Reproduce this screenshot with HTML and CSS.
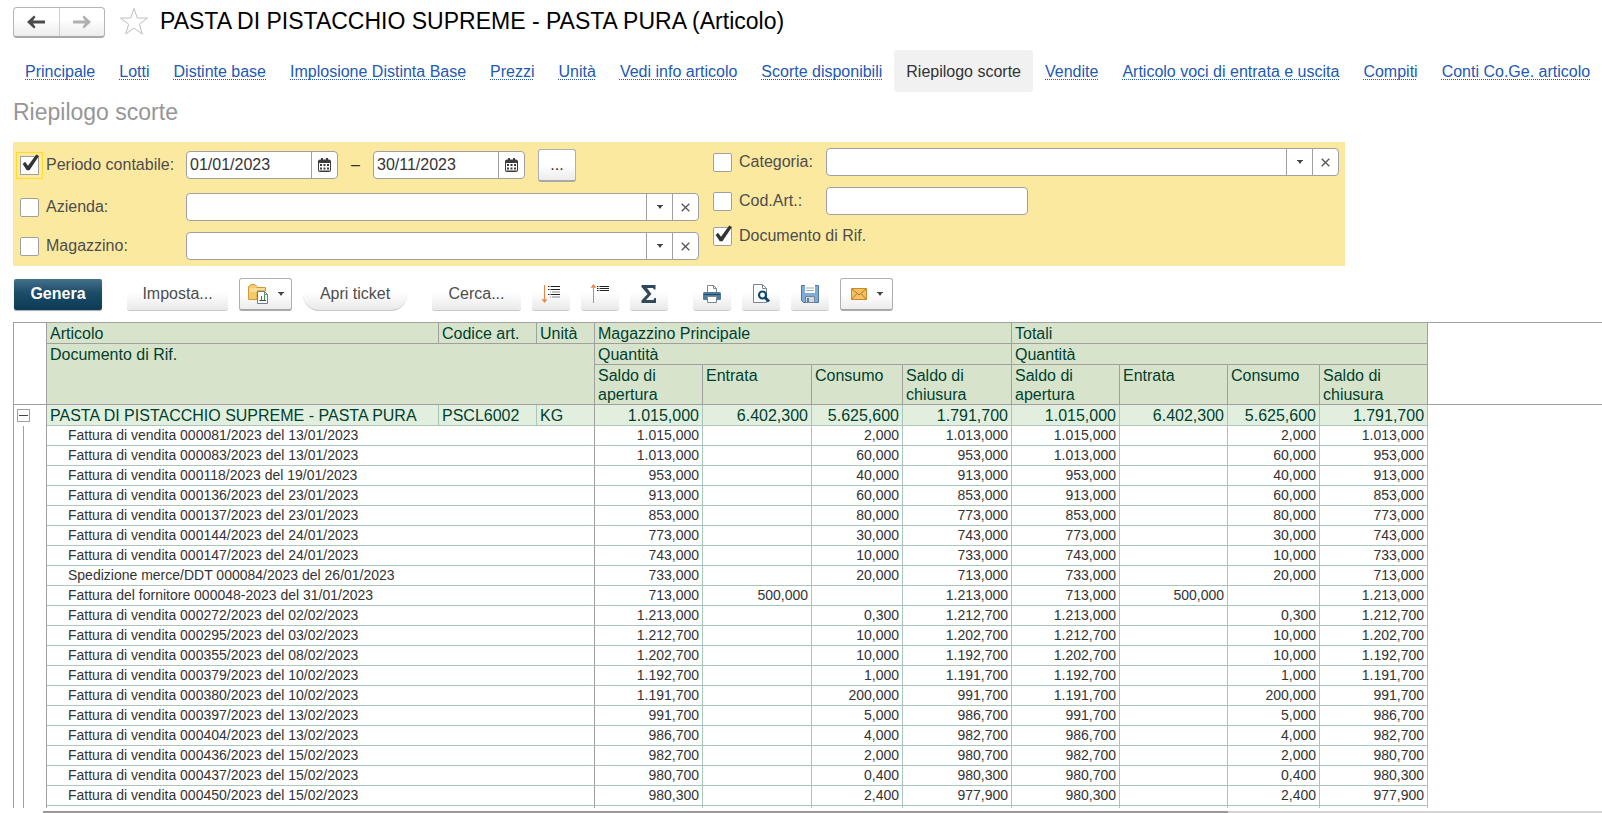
FILE: index.html
```html
<!DOCTYPE html>
<html lang="it">
<head>
<meta charset="utf-8">
<title>PASTA DI PISTACCHIO SUPREME - PASTA PURA (Articolo)</title>
<link rel="stylesheet" href="styles.css">
</head>
<body>
<svg class="defs" aria-hidden="true">
  <symbol id="i-cal" viewBox="0 0 13 14"><path d="M1 2h11v11.500H1z" fill="#fff"/><path fill="#3c3c3c" fill-rule="evenodd" d="M2 1.500h1V0h2v1.500h3V0h2v1.500h1a2 2 0 0 1 2 1.500V12a2 2 0 0 1-2 2H2a2 2 0 0 1-2-2V3a2 2 0 0 1 2-1.500zM1 5v7.500h11V5z"/><path fill="#3c3c3c" d="M2 6h2v2H2zM5.500 6h2v2h-2zM9 6h2v2H9zM2 9.500h2v2H2zM5.500 9.500h2v2h-2zM9 9.500h2v2H9z"/></symbol>
  <symbol id="i-down" viewBox="0 0 6 4"><path fill="#444" d="M0 0h6v1H5L3.500 3.500h-1L1 1H0z"/></symbol>
  <symbol id="i-x" viewBox="0 0 9 9"><path d="M.7.7l7.600 7.600M8.300.7L.7 8.300" stroke="#555" stroke-width="1.300" fill="none"/></symbol>
</svg>
<div class="page">
  <header class="head">
    <div class="nav">
      <button type="button" aria-label="Indietro"><svg width="18" height="14" viewBox="0 0 18 14"><path fill="#4a4a4a" d="M0 7l7-6.500 1.500 1.500L6 5.500h12v3H6L8.500 12 7 13.500z"/></svg></button>
      <button type="button" aria-label="Avanti"><svg width="18" height="14" viewBox="0 0 18 14"><path fill="#b0b0b0" d="M18 7L11 .5 9.500 2 12 5.500H0v3h12L9.500 12l1.500 1.500z"/></svg></button>
    </div>
    <button type="button" class="star" aria-label="Preferiti"><svg width="30" height="29" viewBox="0 0 30 29"><path d="M15 1.500l3.300 9.500 10.200.1-8.200 6.100 3 9.800L15 21.200 6.700 27l3-9.800L1.500 11.100l10.200-.1z" fill="#fff" stroke="#bcbfc2"/></svg></button>
    <h1>PASTA DI PISTACCHIO SUPREME - PASTA PURA (Articolo)</h1>
  </header>
  <nav class="tabs">
    <a href="#">Principale</a><a href="#">Lotti</a><a href="#">Distinte base</a><a href="#">Implosione Distinta Base</a><a href="#">Prezzi</a><a href="#">Unità</a><a href="#">Vedi info articolo</a><a href="#">Scorte disponibili</a><a href="#" class="on" aria-current="page">Riepilogo scorte</a><a href="#">Vendite</a><a href="#">Articolo voci di entrata e uscita</a><a href="#">Compiti</a><a href="#">Conti Co.Ge. articolo</a>
  </nav>
  <h2>Riepilogo scorte</h2>

  <form class="filters">
    <div class="group left">
      <div class="row tall">
        <label class="lab"><input type="checkbox" class="focus" checked>Periodo contabile:</label>
        <div class="field date"><input type="text" value="01/01/2023" aria-label="Dal"><button type="button" aria-label="Calendario"><svg width="13" height="14"><use href="#i-cal"/></svg></button></div>
        <span class="dash">–</span>
        <div class="field date"><input type="text" value="30/11/2023" aria-label="Al"><button type="button" aria-label="Calendario"><svg width="13" height="14"><use href="#i-cal"/></svg></button></div>
        <button type="button" class="btn more">...</button>
      </div>
      <div class="row">
        <label class="lab"><input type="checkbox">Azienda:</label>
        <div class="field wide"><input type="text" aria-label="Azienda"><button type="button" aria-label="Scegli"><svg width="6" height="4"><use href="#i-down"/></svg></button><button type="button" aria-label="Cancella"><svg width="9" height="9"><use href="#i-x"/></svg></button></div>
      </div>
      <div class="row">
        <label class="lab"><input type="checkbox">Magazzino:</label>
        <div class="field wide"><input type="text" aria-label="Magazzino"><button type="button" aria-label="Scegli"><svg width="6" height="4"><use href="#i-down"/></svg></button><button type="button" aria-label="Cancella"><svg width="9" height="9"><use href="#i-x"/></svg></button></div>
      </div>
    </div>
    <div class="group right">
      <div class="row">
        <label class="lab"><input type="checkbox">Categoria:</label>
        <div class="field wide"><input type="text" aria-label="Categoria"><button type="button" aria-label="Scegli"><svg width="6" height="4"><use href="#i-down"/></svg></button><button type="button" aria-label="Cancella"><svg width="9" height="9"><use href="#i-x"/></svg></button></div>
      </div>
      <div class="row">
        <label class="lab"><input type="checkbox">Cod.Art.:</label>
        <div class="field code"><input type="text" aria-label="Codice articolo"></div>
      </div>
      <div class="row">
        <label><input type="checkbox" checked>Documento di Rif.</label>
      </div>
    </div>
  </form>

  <div class="toolbar">
    <div class="set"><button type="button" class="primary">Genera</button></div>
    <div class="set">
      <button type="button" class="soft w-imp">Imposta...</button>
      <button type="button" class="btn drop" aria-label="Varianti"><svg width="20" height="20" viewBox="0 0 20 20"><path d="M.5 15.500v-13L3 .5h4l2 2v1h8.500V7H9v8.500z" fill="#f3cb6b" stroke="#d39b35"/><path d="M1.500 5h15M2 7h7" stroke="#fff0b8"/><path d="M9.500 7.500h7l3 3v9h-10z" fill="#fff" stroke="#6a7f91"/><path d="M16.500 7.500v3h3" fill="none" stroke="#6a7f91"/><path d="M11.500 16.500h6.500" stroke="#445"/><path d="M13.500 12v4" stroke="#d33"/><path d="M16.500 11v5" stroke="#393"/></svg><svg width="6" height="4"><use href="#i-down"/></svg></button>
      <button type="button" class="soft round w-tic">Apri ticket</button>
    </div>
    <div class="set">
      <button type="button" class="soft w-cer">Cerca...</button>
      <button type="button" class="soft icon" aria-label="Espandi"><svg width="20" height="20" viewBox="0 0 20 20"><path d="M3.500 1v14" stroke="#f08040"/><path d="M1 15.500h5l-2.500 3z" fill="#f08040" stroke="#f08040" stroke-width=".5"/><path d="M7 2.500h1.500M9.500 2.500H19M7 5.500h1.500M9.500 5.500H19M7 10.500h1.500M9.500 10.500H19" stroke="#222"/><path d="M9 8h1M11 8h8M9 13h1M11 13h8" stroke="#888"/></svg></button>
      <button type="button" class="soft icon" aria-label="Comprimi"><svg width="20" height="20" viewBox="0 0 20 20"><path d="M3.500 4v15" stroke="#f08040"/><path d="M1 3.500h5L3.500.500z" fill="#f08040" stroke="#f08040" stroke-width=".5"/><path d="M7 2.500h1.500M9.500 2.500H19M7 4.500h1.500M9.500 4.500H19M7 6.500h1.500M9.500 6.500H19" stroke="#222"/></svg></button>
      <button type="button" class="soft icon" aria-label="Somma"><svg width="16" height="18" viewBox="0 0 16 18"><path fill="#31495a" d="M.5 0h14v4.500h-1.500L12 3H6l4.500 6L5 15h7.500l1-2H15v5H.5v-2.500L6.500 9 .5 2z"/></svg></button>
    </div>
    <div class="set">
      <button type="button" class="soft icon" aria-label="Stampa"><svg width="18" height="18" viewBox="0 0 18 18"><path d="M4.500 8V.500h6l3 3V8z" fill="#fff" stroke="#7c8890"/><path d="M10.500.500v3h3" fill="none" stroke="#7c8890"/><path d="M1.500 7h15a1.500 1.500 0 0 1 1.500 1.500V14a1 1 0 0 1-1 1H1a1 1 0 0 1-1-1V8.500A1.500 1.500 0 0 1 1.500 7z" fill="#4f7c9c"/><path d="M1 9.500h16" stroke="#244b66"/><path d="M4.500 11.500h9v6h-9z" fill="#fff" stroke="#7c8890"/></svg></button>
      <button type="button" class="soft icon" aria-label="Anteprima"><svg width="18" height="19" viewBox="0 0 18 19"><path d="M1.500.500h9l4 4v14h-13z" fill="#fff" stroke="#7c8890"/><path d="M10.500.500v4h4" fill="none" stroke="#7c8890"/><circle cx="10.500" cy="11" r="3.500" fill="#fff" stroke="#0d4a73" stroke-width="2.200"/><path d="M13 13.500l4 4" stroke="#0d4a73" stroke-width="3"/></svg></button>
      <button type="button" class="soft icon" aria-label="Salva"><svg width="18" height="18" viewBox="0 0 18 18"><path d="M.5.500h17v17h-15l-2-2z" fill="#7fabd9" stroke="#50789f"/><path d="M4 0h10v8H4z" fill="#fff"/><path d="M5 3h8M5 5.500h8" stroke="#9ab"/><path d="M4.500 11.500h9v6h-9z" fill="#d4d9de" stroke="#6c859c"/><path d="M6 13h2v4H6z" fill="#5f7d98"/></svg></button>
      <button type="button" class="btn drop" aria-label="Invia"><svg width="16" height="12" viewBox="0 0 16 12"><path d="M.5.500h15v11H.5z" fill="#f5c163" stroke="#c98a2c"/><path d="M1 1l7 6 7-6M1 11l5-5.500M15 11l-5-5.500" fill="none" stroke="#b0762a"/></svg><svg width="6" height="4"><use href="#i-down"/></svg></button>
    </div>
  </div>

  <div class="report">
    <table>
      <colgroup><col class="c-gut"><col class="c-art"><col class="c-cod"><col class="c-uni"><col class="c-a"><col class="c-b"><col class="c-c"><col class="c-b"><col class="c-a"><col class="c-a"><col class="c-d"><col class="c-a"><col></colgroup>
      <thead>
        <tr><td class="blank" rowspan="3"></td><th>Articolo</th><th>Codice art.</th><th>Unità</th><th colspan="4">Magazzino Principale</th><th colspan="4">Totali</th><td class="rest" rowspan="3"></td></tr>
        <tr><th colspan="3" rowspan="2">Documento di Rif.</th><th colspan="4">Quantità</th><th colspan="4">Quantità</th></tr>
        <tr><th>Saldo di apertura</th><th>Entrata</th><th>Consumo</th><th>Saldo di chiusura</th><th>Saldo di apertura</th><th>Entrata</th><th>Consumo</th><th>Saldo di chiusura</th></tr>
      </thead>
      <tbody>
        <tr class="sum"><td class="gut"><button type="button" class="toggle" aria-label="Comprimi gruppo"></button></td><td>PASTA DI PISTACCHIO SUPREME - PASTA PURA</td><td>PSCL6002</td><td class="edge">KG</td><td>1.015,000</td><td>6.402,300</td><td>5.625,600</td><td>1.791,700</td><td>1.015,000</td><td>6.402,300</td><td>5.625,600</td><td>1.791,700</td></tr>
        <tr><td class="gut"></td><td class="doc" colspan="3">Fattura di vendita 000081/2023 del 13/01/2023</td><td>1.015,000</td><td></td><td>2,000</td><td>1.013,000</td><td>1.015,000</td><td></td><td>2,000</td><td>1.013,000</td></tr>
        <tr><td class="gut"></td><td class="doc" colspan="3">Fattura di vendita 000083/2023 del 13/01/2023</td><td>1.013,000</td><td></td><td>60,000</td><td>953,000</td><td>1.013,000</td><td></td><td>60,000</td><td>953,000</td></tr>
        <tr><td class="gut"></td><td class="doc" colspan="3">Fattura di vendita 000118/2023 del 19/01/2023</td><td>953,000</td><td></td><td>40,000</td><td>913,000</td><td>953,000</td><td></td><td>40,000</td><td>913,000</td></tr>
        <tr><td class="gut"></td><td class="doc" colspan="3">Fattura di vendita 000136/2023 del 23/01/2023</td><td>913,000</td><td></td><td>60,000</td><td>853,000</td><td>913,000</td><td></td><td>60,000</td><td>853,000</td></tr>
        <tr><td class="gut"></td><td class="doc" colspan="3">Fattura di vendita 000137/2023 del 23/01/2023</td><td>853,000</td><td></td><td>80,000</td><td>773,000</td><td>853,000</td><td></td><td>80,000</td><td>773,000</td></tr>
        <tr><td class="gut"></td><td class="doc" colspan="3">Fattura di vendita 000144/2023 del 24/01/2023</td><td>773,000</td><td></td><td>30,000</td><td>743,000</td><td>773,000</td><td></td><td>30,000</td><td>743,000</td></tr>
        <tr><td class="gut"></td><td class="doc" colspan="3">Fattura di vendita 000147/2023 del 24/01/2023</td><td>743,000</td><td></td><td>10,000</td><td>733,000</td><td>743,000</td><td></td><td>10,000</td><td>733,000</td></tr>
        <tr><td class="gut"></td><td class="doc" colspan="3">Spedizione merce/DDT 000084/2023 del 26/01/2023</td><td>733,000</td><td></td><td>20,000</td><td>713,000</td><td>733,000</td><td></td><td>20,000</td><td>713,000</td></tr>
        <tr><td class="gut"></td><td class="doc" colspan="3">Fattura del fornitore 000048-2023 del 31/01/2023</td><td>713,000</td><td>500,000</td><td></td><td>1.213,000</td><td>713,000</td><td>500,000</td><td></td><td>1.213,000</td></tr>
        <tr><td class="gut"></td><td class="doc" colspan="3">Fattura di vendita 000272/2023 del 02/02/2023</td><td>1.213,000</td><td></td><td>0,300</td><td>1.212,700</td><td>1.213,000</td><td></td><td>0,300</td><td>1.212,700</td></tr>
        <tr><td class="gut"></td><td class="doc" colspan="3">Fattura di vendita 000295/2023 del 03/02/2023</td><td>1.212,700</td><td></td><td>10,000</td><td>1.202,700</td><td>1.212,700</td><td></td><td>10,000</td><td>1.202,700</td></tr>
        <tr><td class="gut"></td><td class="doc" colspan="3">Fattura di vendita 000355/2023 del 08/02/2023</td><td>1.202,700</td><td></td><td>10,000</td><td>1.192,700</td><td>1.202,700</td><td></td><td>10,000</td><td>1.192,700</td></tr>
        <tr><td class="gut"></td><td class="doc" colspan="3">Fattura di vendita 000379/2023 del 10/02/2023</td><td>1.192,700</td><td></td><td>1,000</td><td>1.191,700</td><td>1.192,700</td><td></td><td>1,000</td><td>1.191,700</td></tr>
        <tr><td class="gut"></td><td class="doc" colspan="3">Fattura di vendita 000380/2023 del 10/02/2023</td><td>1.191,700</td><td></td><td>200,000</td><td>991,700</td><td>1.191,700</td><td></td><td>200,000</td><td>991,700</td></tr>
        <tr><td class="gut"></td><td class="doc" colspan="3">Fattura di vendita 000397/2023 del 13/02/2023</td><td>991,700</td><td></td><td>5,000</td><td>986,700</td><td>991,700</td><td></td><td>5,000</td><td>986,700</td></tr>
        <tr><td class="gut"></td><td class="doc" colspan="3">Fattura di vendita 000404/2023 del 13/02/2023</td><td>986,700</td><td></td><td>4,000</td><td>982,700</td><td>986,700</td><td></td><td>4,000</td><td>982,700</td></tr>
        <tr><td class="gut"></td><td class="doc" colspan="3">Fattura di vendita 000436/2023 del 15/02/2023</td><td>982,700</td><td></td><td>2,000</td><td>980,700</td><td>982,700</td><td></td><td>2,000</td><td>980,700</td></tr>
        <tr><td class="gut"></td><td class="doc" colspan="3">Fattura di vendita 000437/2023 del 15/02/2023</td><td>980,700</td><td></td><td>0,400</td><td>980,300</td><td>980,700</td><td></td><td>0,400</td><td>980,300</td></tr>
        <tr><td class="gut"></td><td class="doc" colspan="3">Fattura di vendita 000450/2023 del 15/02/2023</td><td>980,300</td><td></td><td>2,400</td><td>977,900</td><td>980,300</td><td></td><td>2,400</td><td>977,900</td></tr>
        <tr><td class="gut"></td><td class="doc" colspan="3"></td><td></td><td></td><td></td><td></td><td></td><td></td><td></td><td></td></tr>
      </tbody>
    </table>
  </div>
  <div class="scroll"><div class="thumb"></div></div>
</div>
</body>
</html>
```
FILE: styles.css
```css
* { box-sizing: border-box; }
body {
  margin: 0;
  background: #fff;
  color: #4d4d4d;
  font: 16px/20px "Liberation Sans", Arial, sans-serif;
}
button, input { font: inherit; color: inherit; margin: 0; padding: 0; border: 0; background: none; }
svg { display: block; flex: none; }
.defs { position: absolute; width: 0; height: 0; }
.page {
  display: flex;
  flex-direction: column;
  height: 100vh;
  padding: 7px 0 0 13px;
  overflow: hidden;
}

.head { display: flex; align-items: flex-start; flex: none; height: 31px; }
.nav {
  display: flex;
  width: 92px;
  height: 31px;
  border: 1px solid #b5b5b5;
  border-bottom: 2px solid #a8a8a8;
  border-radius: 4px;
  background: linear-gradient(#fff 40%, #ececec);
}
.nav button { flex: 1; display: flex; align-items: center; justify-content: center; }
.nav button + button { border-left: 1px solid #d0d0d0; }
.star { margin-left: 14px; }
h1 { margin: 0 0 0 11px; color: #000; font-size: 23px; line-height: 28px; font-weight: 400; white-space: nowrap; }

.tabs { display: flex; flex: none; margin-top: 12px; }
.tabs a {
  padding: 12px 12px 10px;
  color: #2159b3;
  white-space: nowrap;
  text-decoration: underline dotted 1px;
  text-underline-offset: 2px;
  text-decoration-skip-ink: none;
}
.tabs .on { border-radius: 4px; background: #f1f1f1; color: #333; text-decoration: none; }

h2 { margin: 6px 0 0; color: #969696; font-size: 23px; line-height: 28px; font-weight: 400; }

.filters {
  display: flex;
  flex: none;
  gap: 14px;
  max-width: 1332px;
  margin-top: 16px;
  padding: 6px 6px 6px 7px;
  background: #fce9a0;
}
.group { display: flex; flex-direction: column; gap: 11px; }
.left { flex: 1 1 166px; }
.right { flex: 1 1 113px; }
.row { display: flex; align-items: center; }
.tall { height: 34px; }
.filters label { display: flex; align-items: center; gap: 7px; white-space: nowrap; }
.left .lab { flex: 0 0 166px; }
.right .lab { flex: 0 0 113px; }
.filters input[type="checkbox"] {
  position: relative;
  flex: none;
  width: 19px;
  height: 19px;
  appearance: none;
  border: 1px solid #a0a0a0;
  border-radius: 2px;
  background: #fff;
}
.filters input.focus { border-radius: 0; outline: 1px solid #ffdc2e; outline-offset: 3px; }
.filters input[type="checkbox"]:checked::after {
  content: "";
  position: absolute;
  inset: -3px -1px 1px 1px;
  background: #333;
  clip-path: polygon(4% 55%, 18% 44%, 35% 64%, 84% 5%, 100% 13%, 44% 88%, 28% 88%);
}
.field {
  display: flex;
  height: 28px;
  overflow: hidden;
  border: 1px solid #a0a0a0;
  border-radius: 4px;
  background: #fff;
}
.field input { flex: 1; min-width: 0; padding: 0 3px; color: #333; outline: 0; }
.field button { flex: 0 0 26px; display: flex; align-items: center; justify-content: center; border-left: 1px solid #a0a0a0; }
.wide { flex: 1; }
.date { flex: 0 0 152px; }
.code { flex: 0 0 202px; }
.dash { flex: 0 0 35px; text-align: center; color: #333; }
.btn {
  border: 1px solid #b0b0b0;
  border-bottom: 2px solid #a8a8a8;
  border-radius: 3px;
  background: linear-gradient(#fff 50%, #ececec);
}
.more { width: 38px; height: 33px; margin-left: 13px; color: #333; }

.toolbar { display: flex; flex: none; gap: 25px; margin-top: 11px; padding-left: 1px; }
.set { display: flex; align-items: center; gap: 11px; height: 34px; }
.primary {
  width: 88px;
  height: 31px;
  border-radius: 2px;
  background: linear-gradient(#44708a, #1c4c66 45%, #0b3b56);
  box-shadow: 0 1px 1px #aaa;
  color: #fff;
  font-weight: 700;
}
.soft {
  display: flex;
  align-items: center;
  justify-content: center;
  height: 33px;
  border-bottom: 1px solid #c8c8c8;
  border-radius: 3px;
  background: linear-gradient(#fff 45%, #e9e9e9);
}
.round { border-radius: 16px; }
.icon { width: 38px; }
.w-imp { width: 101px; }
.w-tic { width: 104px; }
.w-cer { width: 89px; }
.drop { display: flex; align-items: center; justify-content: center; gap: 10px; width: 53px; height: 33px; }

.report { flex: 1; min-height: 0; margin-top: 11px; overflow: hidden; }
table {
  width: 100%;
  table-layout: fixed;
  border-collapse: separate;
  border-spacing: 0;
  border-top: 1px solid #a0a0a0;
  border-left: 1px solid #a0a0a0;
}
.c-gut { width: 33px; }
.c-art { width: 392px; }
.c-cod { width: 98px; }
.c-uni { width: 58px; }
.c-a { width: 108px; }
.c-b { width: 109px; }
.c-c { width: 91px; }
.c-d { width: 92px; }
th, td { padding: 0 3px; vertical-align: top; white-space: nowrap; }
th {
  padding-top: 1px;
  border-right: 1px solid #a0a0a0;
  border-bottom: 1px solid #a0a0a0;
  background: #d7e4cb;
  color: #003f2f;
  font-weight: 400;
  line-height: 19px;
  text-align: left;
  white-space: normal;
}
.blank { border-right: 1px solid #a0a0a0; border-bottom: 1px solid #a0a0a0; }
.rest { border-bottom: 1px solid #a0a0a0; }
tbody td {
  height: 20px;
  border-right: 1px solid #a9c6bb;
  border-bottom: 1px solid #a9c6bb;
  color: #333;
  font-size: 14px;
  line-height: 19px;
  text-align: right;
}
.sum td { height: 21px; padding-top: 1px; background: #e2efde; color: #003f2f; font-size: 16px; }
.sum td:nth-child(-n+4) { text-align: left; }
tbody .doc { padding-left: 21px; border-right-color: #a0a0a0; text-align: left; }
tbody .edge { border-right-color: #a0a0a0; }
tbody .gut {
  border-right-color: #a0a0a0;
  border-bottom: 0;
  background: linear-gradient(#a0a0a0, #a0a0a0) 9px 0 / 1px 100% no-repeat;
}
.sum .gut { padding: 4px 0 0 3px; background: none; }
.toggle {
  display: block;
  width: 13px;
  height: 13px;
  border: 1px solid #a0a0a0;
  background: linear-gradient(#444, #444) center / 9px 1px no-repeat;
}

.scroll { display: flex; flex: none; height: 2px; margin: 3px 0 0 30px; background: #d4d4d4; }
.thumb { width: 76%; background: #999; }
```
